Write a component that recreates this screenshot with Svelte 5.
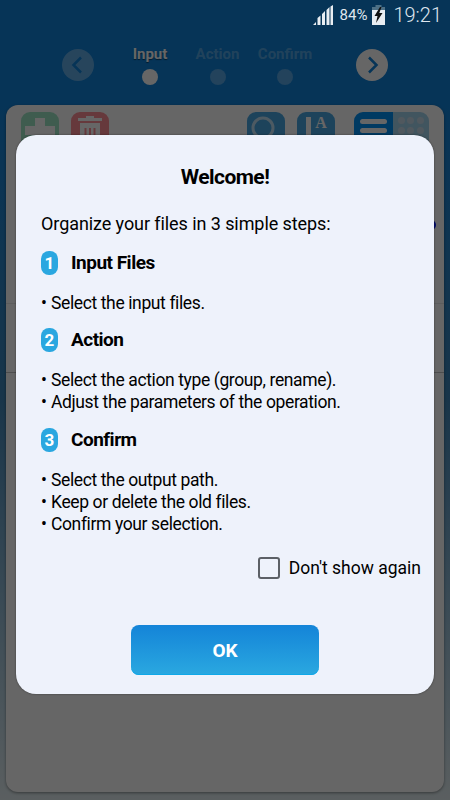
<script lang="ts">
  const steps = ["Input", "Action", "Confirm"];
  const guide = [
    { n: 1, title: "Input Files", lines: ["Select the input files."] },
    { n: 2, title: "Action", lines: ["Select the action type (group, rename).", "Adjust the parameters of the operation."] },
    { n: 3, title: "Confirm", lines: ["Select the output path.", "Keep or delete the old files.", "Confirm your selection."] }
  ];
</script>

<div class="screen">
  <div class="stepper">
    <button class="nav prev" aria-label="Back">
      <svg viewBox="0 0 32 32" width="32" height="32"><path d="M19 8.500 L11.500 16 L19 23.500" /></svg>
    </button>
    <div class="steps">
      {#each steps as step, i}
        <div class="step" class:active={i === 0}>
          <span>{step}</span>
          <i></i>
        </div>
      {/each}
    </div>
    <button class="nav next" aria-label="Next">
      <svg viewBox="0 0 32 32" width="32" height="32"><path d="M13 8.500 L20.500 16 L13 23.500" /></svg>
    </button>
  </div>

  <div class="panel">
    <div class="toolbar">
      <div class="tool add">
        <svg viewBox="0 0 38 38" width="38" height="38"><path d="M14 6h10v8h10v9H24v10H14V23H4v-9h10z" /></svg>
      </div>
      <div class="tool trash">
        <svg viewBox="0 0 38 38" width="38" height="38">
          <path d="M15 4h8v2h8v3H7V6h8zM9 11h20v23H9z" />
          <path class="slots" d="M14.500 16v14M19 16v14M23.500 16v14" />
        </svg>
      </div>
      <div class="spacer"></div>
      <div class="tool search">
        <svg viewBox="0 0 38 38" width="38" height="38"><circle cx="16" cy="16" r="10" /></svg>
      </div>
      <div class="tool sort">
        <svg viewBox="0 0 38 38" width="38" height="38">
          <path d="M9 5h5v33H9z" />
          <text x="24" y="16">A</text>
        </svg>
      </div>
      <div class="toggle">
        <div class="half on">
          <b></b><b></b>
        </div>
        <div class="half off">
          {#each Array(6) as _}<em></em>{/each}
        </div>
      </div>
    </div>
    <div class="row tall"><span class="pin"></span></div>
    <div class="row dark"></div>
  </div>

  <div class="overlay"></div>

  <div class="status">
    <svg class="signal" viewBox="0 0 20 20" width="20" height="20">
      <path d="M0 20l3-3v3zM4.500 20v-7l3-2.500V20zM9 20V9l3-3v14zM13.500 20V5l3-3v18zM17.500 20V1.500L20 0v20z" />
    </svg>
    <span class="pct">84%</span>
    <svg class="battery" viewBox="0 0 13 20" width="13" height="20">
      <path class="cap" d="M3.500 0h6v2h3.500v3H0V2h3.500z" />
      <path class="cell" d="M0 5h13v15H0z" />
      <path class="bolt" d="M8 2 2.500 11h3L4 18l6.500-10h-3.200L9.500 2z" />
    </svg>
    <span class="time">19:21</span>
  </div>

  <div class="modal">
    <h1>Welcome!</h1>
    <p class="intro">Organize your files in 3 simple steps:</p>
    {#each guide as g}
      <div class="head">
        <span class="badge">{g.n}</span>
        <h2>{g.title}</h2>
      </div>
      <ul>
        {#each g.lines as line}
          <li><span class="dot">•</span>{line}</li>
        {/each}
      </ul>
    {/each}
    <div class="check">
      <span class="box"></span>
      <span>Don't show again</span>
    </div>
    <button class="ok">OK</button>
  </div>
</div>

<style>
  :global(body) {
    margin: 0;
  }

  .screen {
    position: relative;
    display: flex;
    flex-direction: column;
    width: 450px;
    height: 800px;
    overflow: hidden;
    box-sizing: border-box;
    padding: 41px 6px 8px;
    background: linear-gradient(180deg, #0f82da 0%, #0f82da 12%, #3f86b8 50%, #e2edf0 100%);
    font-family: Roboto, "Liberation Sans", sans-serif;
  }

  .stepper {
    display: flex;
    align-items: flex-start;
    height: 64px;
    padding: 0 0 0 56px;
  }

  .nav {
    width: 32px;
    height: 32px;
    margin-top: 8px;
    padding: 0;
    border: 0;
    border-radius: 50%;
  }

  .nav svg {
    display: block;
  }

  .nav path {
    fill: none;
    stroke: #0f82da;
    stroke-width: 2.500;
  }

  .prev {
    background: rgba(255, 255, 255, 0.35);
  }

  .next {
    background: #fff;
  }

  .steps {
    display: flex;
    width: 262px;
    padding-right: 15px;
    box-sizing: border-box;
    justify-content: center;
  }

  .step {
    display: flex;
    flex-direction: column;
    align-items: center;
    gap: 7px;
    width: 67.500px;
    margin-top: 5px;
    color: rgba(255, 255, 255, 0.3);
    font-size: 15px;
    font-weight: 700;
    line-height: 16px;
  }

  .step i {
    width: 16px;
    height: 16px;
    border-radius: 50%;
    background: rgba(255, 255, 255, 0.3);
  }

  .step.active {
    color: #fff;
    text-shadow: 0 1px 1px rgba(0, 0, 0, 0.5);
  }

  .step.active i {
    background: #fff;
  }

  .panel {
    flex: 1;
    border-radius: 12px;
    background: #fff;
    box-shadow: 0 1px 3px rgba(0, 0, 0, 0.4);
  }

  .toolbar {
    display: flex;
    gap: 12px;
    padding: 7px 15px 0;
    height: 60px;
    box-sizing: border-box;
  }

  .spacer {
    flex: 1;
  }

  .tool {
    width: 38px;
    height: 38px;
    border-radius: 9px;
  }

  .tool svg {
    display: block;
  }

  .add {
    background: #9ee6c6;
  }

  .trash {
    background: #ff8f96;
  }

  .search,
  .sort {
    background: #4aa8e4;
  }

  .tool path,
  .tool text {
    fill: #fff;
  }

  .tool text {
    font-family: "Liberation Serif", serif;
    font-size: 16px;
    font-weight: 700;
    text-anchor: middle;
  }

  .tool .slots {
    fill: none;
    stroke: #ff8f96;
    stroke-width: 2;
  }

  .search circle {
    fill: none;
    stroke: #fff;
    stroke-width: 3;
    opacity: 0.65;
  }

  .toggle {
    display: flex;
    width: 75px;
    height: 38px;
    margin-left: 7px;
    border-radius: 9px;
    overflow: hidden;
  }

  .half {
    flex: 1;
    box-sizing: border-box;
  }

  .half.on {
    display: flex;
    flex-direction: column;
    gap: 4px;
    padding: 7px 6px 0;
    background: #0091f5;
  }

  .half.on b {
    display: block;
    height: 5px;
    border-radius: 3px;
    background: #fff;
  }

  .half.off {
    display: grid;
    grid-template-columns: repeat(3, 7px);
    grid-auto-rows: 7px;
    gap: 2.500px;
    padding: 5px 5px 0;
    background: #a4d4ee;
  }

  .half.off em {
    width: 7px;
    height: 7px;
    border-radius: 50%;
    background: #c8dcea;
  }

  .row {
    height: 68px;
    border-bottom: 1px solid #e8e8e8;
  }

  .row.tall {
    display: flex;
    justify-content: flex-end;
    height: 138px;
  }

  .row.dark {
    border-bottom-color: #c4c4c4;
  }

  .pin {
    width: 10px;
    height: 10px;
    margin: 55px 8px 0 0;
    border-radius: 50%;
    background: #0018ff;
  }

  .overlay {
    position: absolute;
    inset: 0;
    background: rgba(0, 0, 0, 0.6);
  }

  .status {
    position: absolute;
    top: 0;
    right: 8px;
    display: flex;
    align-items: center;
    height: 30px;
    color: #dfe6ee;
  }

  .signal {
    margin-right: 7px;
  }

  .signal path {
    fill: #e8edf2;
  }

  .pct {
    margin-right: 5px;
    font-size: 15px;
  }

  .battery {
    margin-right: 8px;
  }

  .cap {
    fill: #4d7086;
  }

  .cell {
    fill: #e8edf2;
  }

  .bolt {
    fill: #111;
  }

  .time {
    font-size: 20px;
    font-weight: 300;
  }

  .modal {
    position: absolute;
    left: 16px;
    top: 135px;
    display: flex;
    flex-direction: column;
    width: 418px;
    height: 559px;
    box-sizing: border-box;
    padding: 30px 13px 19px 25px;
    border-radius: 20px;
    background: #eef2fb;
    box-shadow: 0 0 2px rgba(0, 0, 0, 0.5);
    color: #000;
  }

  h1 {
    margin: 0;
    padding-right: 12px;
    font-size: 21px;
    font-weight: 700;
    letter-spacing: -0.550px;
    line-height: 24px;
    text-align: center;
  }

  .intro {
    margin: 23px 0 0;
    font-size: 18px;
    letter-spacing: -0.080px;
    line-height: 24px;
  }

  .head {
    display: flex;
    align-items: center;
    gap: 13px;
    margin-top: 14.600px;
  }

  .badge {
    width: 17px;
    height: 24px;
    border-radius: 8px;
    background: #2aa7e0;
    color: #fff;
    font-size: 17px;
    font-weight: 700;
    line-height: 24px;
    text-align: center;
  }

  h2 {
    margin: 0;
    font-size: 19px;
    font-weight: 700;
    letter-spacing: -0.500px;
    line-height: 24px;
  }

  ul {
    margin: 17px 0 0;
    padding: 0;
    list-style: none;
    font-size: 17.500px;
    letter-spacing: -0.380px;
    line-height: 22px;
  }

  .dot {
    display: inline-block;
    width: 10px;
  }

  .check {
    display: flex;
    align-items: center;
    justify-content: flex-end;
    gap: 9px;
    margin-top: 22px;
    font-size: 17.500px;
    line-height: 22px;
  }

  .box {
    width: 22px;
    height: 22px;
    box-sizing: border-box;
    border: 2.500px solid #5c6066;
    border-radius: 3px;
  }

  .ok {
    align-self: center;
    width: 188px;
    height: 50px;
    margin: auto 0 0 -12px;
    padding: 0;
    border: 0;
    border-radius: 8px;
    background: linear-gradient(180deg, #1484d8, #2aa8e0);
    box-shadow: inset 0 -1px 0 #0fa8e8;
    color: #fff;
    font-family: inherit;
    font-size: 19px;
    font-weight: 700;
  }
</style>
